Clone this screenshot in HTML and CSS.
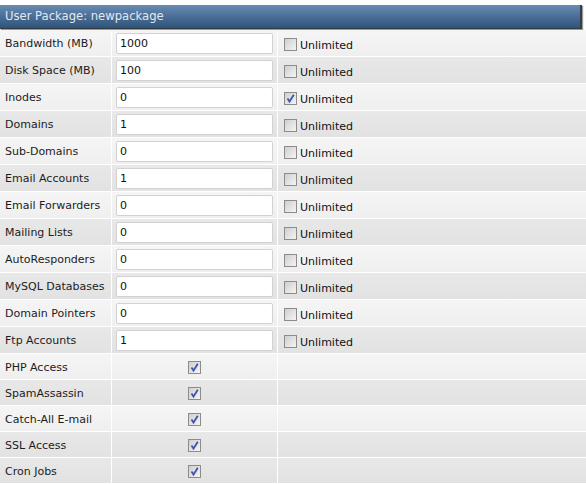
FILE: index.html
```html
<!DOCTYPE html>
<html>
<head>
<meta charset="utf-8">
<link rel="stylesheet" href="styles.css">
</head>
<body>
<div class="panel">
  <div class="head">User Package: newpackage</div>
  <div class="rows">
    <div class="row light"><div class="lbl">Bandwidth (MB)</div><div class="val"><span class="inp">1000</span></div><div class="opt"><span class="cb"></span><span class="ul">Unlimited</span></div></div>
    <div class="row dark"><div class="lbl">Disk Space (MB)</div><div class="val"><span class="inp">100</span></div><div class="opt"><span class="cb"></span><span class="ul">Unlimited</span></div></div>
    <div class="row light"><div class="lbl">Inodes</div><div class="val"><span class="inp">0</span></div><div class="opt"><span class="cb"><svg viewBox="0 0 11 11" width="11" height="11"><path d="M2.5 5.5 L4.5 8.5 L8.8 1.8" fill="none" stroke="#3f56a8" stroke-width="1.8"/></svg></span><span class="ul">Unlimited</span></div></div>
    <div class="row dark"><div class="lbl">Domains</div><div class="val"><span class="inp">1</span></div><div class="opt"><span class="cb"></span><span class="ul">Unlimited</span></div></div>
    <div class="row light"><div class="lbl">Sub-Domains</div><div class="val"><span class="inp">0</span></div><div class="opt"><span class="cb"></span><span class="ul">Unlimited</span></div></div>
    <div class="row dark"><div class="lbl">Email Accounts</div><div class="val"><span class="inp">1</span></div><div class="opt"><span class="cb"></span><span class="ul">Unlimited</span></div></div>
    <div class="row light"><div class="lbl">Email Forwarders</div><div class="val"><span class="inp">0</span></div><div class="opt"><span class="cb"></span><span class="ul">Unlimited</span></div></div>
    <div class="row dark"><div class="lbl">Mailing Lists</div><div class="val"><span class="inp">0</span></div><div class="opt"><span class="cb"></span><span class="ul">Unlimited</span></div></div>
    <div class="row light"><div class="lbl">AutoResponders</div><div class="val"><span class="inp">0</span></div><div class="opt"><span class="cb"></span><span class="ul">Unlimited</span></div></div>
    <div class="row dark"><div class="lbl">MySQL Databases</div><div class="val"><span class="inp">0</span></div><div class="opt"><span class="cb"></span><span class="ul">Unlimited</span></div></div>
    <div class="row light"><div class="lbl">Domain Pointers</div><div class="val"><span class="inp">0</span></div><div class="opt"><span class="cb"></span><span class="ul">Unlimited</span></div></div>
    <div class="row dark"><div class="lbl">Ftp Accounts</div><div class="val"><span class="inp">1</span></div><div class="opt"><span class="cb"></span><span class="ul">Unlimited</span></div></div>
    <div class="row light short"><div class="lbl">PHP Access</div><div class="val center"><span class="cb"><svg viewBox="0 0 11 11" width="11" height="11"><path d="M2.5 5.5 L4.5 8.5 L8.8 1.8" fill="none" stroke="#3f56a8" stroke-width="1.8"/></svg></span></div><div class="opt"></div></div>
    <div class="row dark short"><div class="lbl">SpamAssassin</div><div class="val center"><span class="cb"><svg viewBox="0 0 11 11" width="11" height="11"><path d="M2.5 5.5 L4.5 8.5 L8.8 1.8" fill="none" stroke="#3f56a8" stroke-width="1.8"/></svg></span></div><div class="opt"></div></div>
    <div class="row light short"><div class="lbl">Catch-All E-mail</div><div class="val center"><span class="cb"><svg viewBox="0 0 11 11" width="11" height="11"><path d="M2.5 5.5 L4.5 8.5 L8.8 1.8" fill="none" stroke="#3f56a8" stroke-width="1.8"/></svg></span></div><div class="opt"></div></div>
    <div class="row dark short"><div class="lbl">SSL Access</div><div class="val center"><span class="cb"><svg viewBox="0 0 11 11" width="11" height="11"><path d="M2.5 5.5 L4.5 8.5 L8.8 1.8" fill="none" stroke="#3f56a8" stroke-width="1.8"/></svg></span></div><div class="opt"></div></div>
    <div class="row dark short"><div class="lbl">Cron Jobs</div><div class="val center"><span class="cb"><svg viewBox="0 0 11 11" width="11" height="11"><path d="M2.5 5.5 L4.5 8.5 L8.8 1.8" fill="none" stroke="#3f56a8" stroke-width="1.8"/></svg></span></div><div class="opt"></div></div>
  </div>
</div>
</body>
</html>
```
FILE: styles.css
```css
html, body {
  margin: 0;
  padding: 0;
  background: #ffffff;
}
body {
  font-family: "DejaVu Sans", Verdana, sans-serif;
  font-size: 11px;
  color: #1c1c1c;
  overflow: hidden;
}
.panel {
  padding-top: 5px;
}
.head {
  height: 24px;
  width: 582px;
  box-sizing: border-box;
  padding-left: 5px;
  line-height: 23px;
  font-size: 11.6px;
  color: #e2e8ef;
  background: linear-gradient(#6a8cb2 0%, #4d719a 45%, #2f5479 100%);
  border-bottom: 1px solid #333a40;
  border-right: 2px solid #3a3f44;
  box-shadow: 1px 1px 1px #9a9a9a;
}
.rows {
  margin-top: 1px;
  display: flex;
  flex-direction: column;
  gap: 1px;
}
.row {
  display: grid;
  grid-template-columns: 111px 165px 1fr;
  column-gap: 1px;
  height: 26px;
}
.row.short {
  height: 25px;
}
.row > div {
  display: flex;
  align-items: center;
}
.light > div {
  background: linear-gradient(#f5f5f5, #efefef);
}
.dark > div {
  background: linear-gradient(#e8e8e8, #e2e2e2);
}
.lbl {
  padding-left: 5px;
  padding-top: 1px;
}
.val {
  padding-left: 4px;
}
.val.center {
  justify-content: center;
  padding-left: 0;
  padding-top: 1px;
}
.inp {
  box-sizing: border-box;
  width: 157px;
  height: 21px;
  background: #ffffff;
  border: 1px solid #d2d2d2;
  border-radius: 2px;
  padding-left: 3px;
  line-height: 19px;
  color: #111111;
  display: block;
}
.opt {
  padding-left: 6px;
}
.cb {
  box-sizing: border-box;
  width: 13px;
  height: 13px;
  border: 1px solid #8c8c8c;
  background: linear-gradient(135deg, #cfcfcf, #f4f4f4);
  display: inline-flex;
  align-items: center;
  justify-content: center;
  flex: none;
}
.opt .cb {
  margin-top: 2px;
}
.ul {
  margin-left: 3px;
  margin-top: 4px;
  color: #101018;
}
```
